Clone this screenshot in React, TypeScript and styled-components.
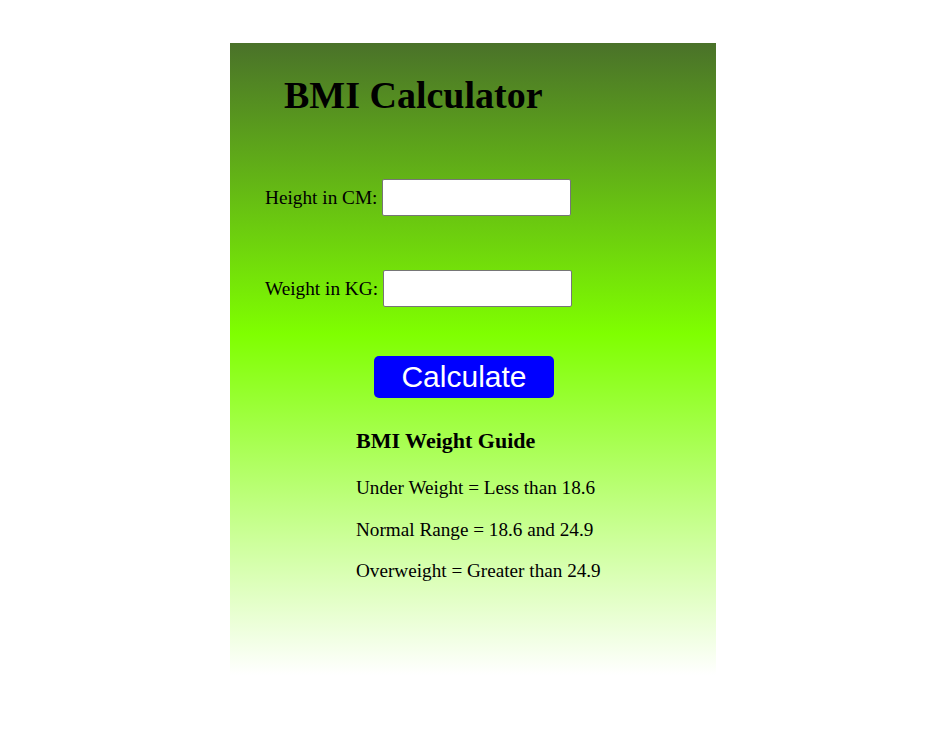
import React from "react";
import styled, { createGlobalStyle } from "styled-components";

const Global = createGlobalStyle`
  html, body { margin: 0; padding: 0; background: #ffffff; }
  body { font-family: "Liberation Serif", "Times New Roman", serif; color: #000; }
`;

const Card = styled.div`
  margin: 43px 0 0 230px;
  width: 486px;
  height: 632px;
  box-sizing: border-box;
  padding-top: 29px;
  background: linear-gradient(#4a7229 0%, #7fff00 46%, #ffffff 100%);
  display: flex;
  flex-direction: column;
`;

const Title = styled.h1`
  margin: 0;
  padding-left: 54px;
  font-size: 38px;
  line-height: 46px;
  font-weight: bold;
`;

const Row = styled.div<{ $top: number }>`
  display: flex;
  align-items: center;
  padding-left: 35px;
  margin-top: ${(p) => p.$top}px;
`;

const Label = styled.label`
  font-size: 19.3px;
  margin-right: 5px;
`;

const Input = styled.input`
  width: 189px;
  height: 37px;
  box-sizing: border-box;
  border: 1px solid #767676;
  border-radius: 2px;
  background: #fff;
  padding: 2px 4px;
  font-size: 16px;
`;

const ButtonWrap = styled.div`
  padding-left: 144px;
  margin-top: 49px;
`;

const Button = styled.button`
  width: 180px;
  height: 42px;
  border: none;
  border-radius: 5px;
  background: #0000ff;
  color: #fff;
  font-family: "Liberation Sans", Arial, sans-serif;
  font-size: 30px;
  padding: 0;
  cursor: pointer;
`;

const Guide = styled.div`
  padding-left: 126px;
  margin-top: 30px;
`;

const GuideTitle = styled.h3`
  margin: 0 0 24px 0;
  font-size: 22px;
  line-height: 25px;
  font-weight: bold;
`;

const GuideLine = styled.p`
  margin: 0 0 19.5px 0;
  font-size: 19.2px;
  line-height: 22px;
`;

export default function App() {
  return (
    <>
      <Global />
      <Card>
        <Title>BMI Calculator</Title>
        <Row $top={61}>
          <Label htmlFor="h">Height in CM:</Label>
          <Input id="h" type="text" />
        </Row>
        <Row $top={54}>
          <Label htmlFor="w">Weight in KG:</Label>
          <Input id="w" type="text" />
        </Row>
        <ButtonWrap>
          <Button>Calculate</Button>
        </ButtonWrap>
        <Guide>
          <GuideTitle>BMI Weight Guide</GuideTitle>
          <GuideLine>Under Weight = Less than 18.6</GuideLine>
          <GuideLine>Normal Range = 18.6 and 24.9</GuideLine>
          <GuideLine>Overweight = Greater than 24.9</GuideLine>
        </Guide>
      </Card>
    </>
  );
}
